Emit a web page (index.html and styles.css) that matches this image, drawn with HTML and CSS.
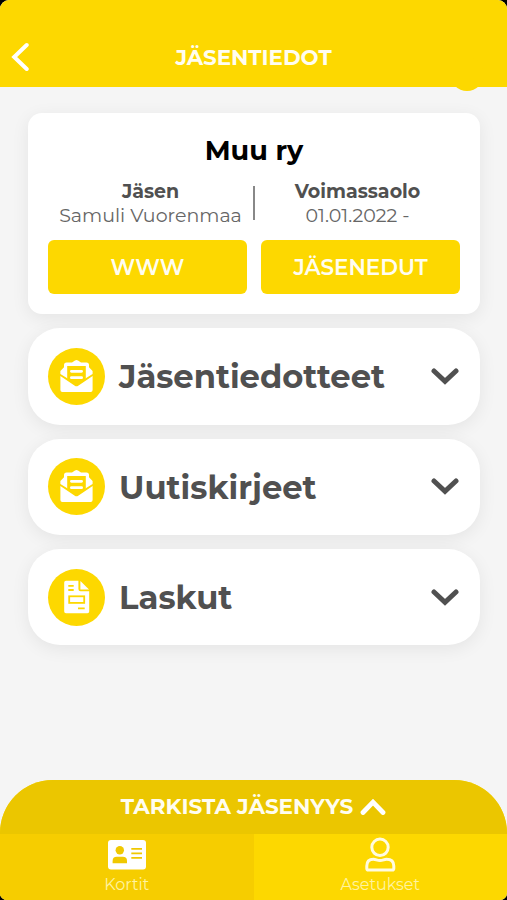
FILE: index.html
```
<!DOCTYPE html>
<html lang="fi">
<head>
  <meta charset="UTF-8" />
  <meta name="viewport" content="width=device-width, initial-scale=1.0"/>
  <title>Jäsentiedot</title>
  <link rel="stylesheet" href="styles.css">
</head>
<body>
  <div class="app">
    <header class="header">
      <svg class="back" viewBox="0 0 18 30"><path d="M15.700 3L3.200 15L15.700 27"/></svg>
      <h1>JÄSENTIEDOT</h1>
      <span class="header-dot"></span>
    </header>

    <main class="content">
      <section class="card">
        <h2>Muu ry</h2>
        <div class="info">
          <div class="info-col">
            <strong>Jäsen</strong>
            <span>Samuli Vuorenmaa</span>
          </div>
          <div class="divider"></div>
          <div class="info-col">
            <strong>Voimassaolo</strong>
            <span>01.01.2022 -</span>
          </div>
        </div>
        <div class="buttons">
          <button class="btn">WWW</button>
          <button class="btn">JÄSENEDUT</button>
        </div>
      </section>

      <section class="row">
        <span class="row-icon">
          <svg viewBox="0 0 57 57">
            <path fill="#fff" d="M16 17Q16 14.500 18.500 14.500H24L27 12.400Q28.500 11.500 30 12.400L33 14.500H38.500Q41 14.500 41 17V19.300L44.600 23V26L28.500 36L12.400 26V23L16 19.300Z"/>
            <path fill="#fdd800" d="M19.200 18H37.800V31L28.500 38L19.200 31Z"/>
            <path fill="#fff" d="M12.400 28L26.800 37.800Q28.500 38.900 30.200 37.800L44.600 28V42Q44.600 44 42.600 44H14.400Q12.400 44 12.400 42Z"/>
            <path stroke="#fff" stroke-width="2.800" stroke-linecap="round" d="M23.400 23.300H33.600M23.400 29.700H33.600"/>
          </svg>
        </span>
        <h3>Jäsentiedotteet</h3>
        <svg class="chevron" viewBox="0 0 28 18"><path d="M3 3L14 13.400L25 3"/></svg>
      </section>

      <section class="row">
        <span class="row-icon">
          <svg viewBox="0 0 57 57">
            <path fill="#fff" d="M16 17Q16 14.500 18.500 14.500H24L27 12.400Q28.500 11.500 30 12.400L33 14.500H38.500Q41 14.500 41 17V19.300L44.600 23V26L28.500 36L12.400 26V23L16 19.300Z"/>
            <path fill="#fdd800" d="M19.200 18H37.800V31L28.500 38L19.200 31Z"/>
            <path fill="#fff" d="M12.400 28L26.800 37.800Q28.500 38.900 30.200 37.800L44.600 28V42Q44.600 44 42.600 44H14.400Q12.400 44 12.400 42Z"/>
            <path stroke="#fff" stroke-width="2.800" stroke-linecap="round" d="M23.400 23.300H33.600M23.400 29.700H33.600"/>
          </svg>
        </span>
        <h3>Uutiskirjeet</h3>
        <svg class="chevron" viewBox="0 0 28 18"><path d="M3 3L14 13.400L25 3"/></svg>
      </section>

      <section class="row">
        <span class="row-icon">
          <svg viewBox="0 0 57 57">
            <path fill="#fff" d="M18 11.800H30.400V20Q30.400 22.300 32.600 22.300H41.200V42.500Q41.200 44.300 39.400 44.300H18Q16.200 44.300 16.200 42.600V13.500Q16.200 11.800 18 11.800Z"/>
            <path fill="#fff" d="M32.400 12L41 20.500H32.400Z"/>
            <g fill="none" stroke="#fdd800" stroke-width="1.800">
              <path d="M20.300 16.800H25.700M20.300 21H25.700M30 39.300H36.700"/>
              <rect x="21.200" y="27.300" width="15" height="6.600"/>
            </g>
          </svg>
        </span>
        <h3>Laskut</h3>
        <svg class="chevron" viewBox="0 0 28 18"><path d="M3 3L14 13.400L25 3"/></svg>
      </section>
    </main>

    <footer class="footer">
      <div class="check-bar">
        <span>TARKISTA JÄSENYYS</span>
        <svg class="up" viewBox="0 0 26 16"><path d="M3 13.500L13 3.200L23 13.500"/></svg>
      </div>
      <nav class="tabs">
        <a class="tab active">
          <svg class="tab-icon" viewBox="0 0 40 36">
            <rect x="1" y="3" width="38" height="29.500" rx="3" fill="#fff"/>
            <g fill="#f0c800">
              <circle cx="12.800" cy="13.300" r="4.200"/>
              <path d="M5.600 26.200V24Q5.600 19.800 9.800 19.800H15.800Q20 19.800 20 24V26.200Z"/>
            </g>
            <path stroke="#f0c800" stroke-width="1.700" d="M24.300 11.800H35M24.300 16.300H35M24.300 20.800H35"/>
          </svg>
          <span>Kortit</span>
        </a>
        <a class="tab">
          <svg class="tab-icon" viewBox="0 0 40 36">
            <g fill="none" stroke="#fffbe0" stroke-width="3">
              <circle cx="20" cy="10.300" r="8.200"/>
              <path d="M8.400 33Q6.800 33 6.800 31.400V29Q6.800 22.300 13.500 22.300C16 22.300 17 23.600 20 23.600S24 22.300 26.500 22.300Q33.800 22.300 33.800 29V31.400Q33.800 33 32.200 33Z"/>
            </g>
          </svg>
          <span>Asetukset</span>
        </a>
      </nav>
    </footer>
  </div>
</body>
</html>
```
FILE: styles.css
```
* {
  box-sizing: border-box;
}

html {
  background: #000;
}

body {
  margin: 0;
  font-family: Montserrat, Inter, sans-serif;
  color: #505050;
}

h1, h2, h3 {
  margin: 0;
  font-weight: bold;
  white-space: nowrap;
}

.app {
  height: 900px;
  display: flex;
  flex-direction: column;
  background: #f5f5f5;
  border-radius: 9px 9px 7px 7px;
  overflow: hidden;
}

.header {
  position: relative;
  height: 87px;
  padding: 42px 10px 0 11px;
  display: flex;
  align-items: flex-start;
  background: #fdd800;
}

.header h1 {
  flex: 1;
  margin-right: 19px;
  font-size: 21.4px;
  line-height: 30px;
  text-align: center;
  color: #fffdf0;
}

.back {
  width: 18px;
  height: 30px;
}

.back path, .chevron path, .up path {
  fill: none;
  stroke: #fff;
  stroke-width: 4;
  stroke-linecap: round;
}

/* bottom of the round button hidden behind the header */
.header-dot {
  position: absolute;
  right: 23px;
  bottom: -4px;
  width: 34px;
  height: 34px;
  border-radius: 50%;
  background: #fdd800;
}

.content {
  flex: 1;
  padding: 25.5px 27px 0 28px;
  display: flex;
  flex-direction: column;
  gap: 14px;
}

.card {
  height: 201.8px;
  padding: 20px 20px 0;
  background: white;
  border-radius: 14px;
  box-shadow: 0 4px 18px rgba(0,0,0,0.07);
}

.card h2 {
  font-size: 27.1px;
  line-height: 35px;
  text-align: center;
  color: #000;
}

.info {
  display: flex;
  margin-top: 12.5px;
  align-items: flex-start;
}

.info-col {
  flex: 1;
  display: flex;
  flex-direction: column;
  align-items: center;
  font-size: 19px;
  line-height: 24px;
  white-space: nowrap;
}

.info-col span {
  color: #666;
}

.divider {
  width: 2px;
  height: 34px;
  margin: 5.5px 0 0;
  background: #888;
}

.buttons {
  display: flex;
  gap: 14px;
  margin-top: 12px;
}

.btn {
  flex: 1;
  height: 54px;
  padding: 0;
  border: none;
  border-radius: 6px;
  background: #fdd800;
  color: #fffdf0;
  font-family: inherit;
  font-size: 21.5px;
  font-weight: 600;
}

.row {
  height: 96.4px;
  padding: 0 20px;
  display: flex;
  align-items: center;
  background: white;
  border-radius: 32px;
  box-shadow: 0 4px 18px rgba(0,0,0,0.07);
}

.row-icon {
  width: 57px;
  height: 57px;
  border-radius: 50%;
  background: #fdd800;
}

.row-icon svg {
  display: block;
}

.row h3 {
  flex: 1;
  padding: 1.5px 0 0 14px;
  font-size: 32.2px;
  line-height: 40px;
}

.chevron {
  width: 28px;
  height: 18px;
  margin: 1px 1px 0 0;
}

.chevron path {
  stroke: #505050;
  stroke-width: 5;
}

.footer {
  height: 120px;
  background: #fdd800;
  border-radius: 53px 53px 0 0;
  overflow: hidden;
}

.check-bar {
  height: 53.5px;
  padding-bottom: 1px;
  display: flex;
  align-items: center;
  justify-content: center;
  gap: 7px;
  background: #ebc600;
  color: #fffdf0;
  font-size: 21.5px;
  font-weight: bold;
  white-space: nowrap;
}

.up {
  width: 26px;
  height: 16px;
  margin-top: 1px;
}

.up path {
  stroke-width: 4.8;
}

.tabs {
  display: flex;
  height: 66.5px;
}

.tab {
  flex: 1;
  padding-top: 3px;
  display: flex;
  flex-direction: column;
  align-items: center;
  color: #fff3a0;
  font-size: 16px;
  line-height: 20px;
}

.tab.active {
  background: #f6cd00;
}

.tab-icon {
  width: 40px;
  height: 36px;
  margin-bottom: 2px;
}
```
